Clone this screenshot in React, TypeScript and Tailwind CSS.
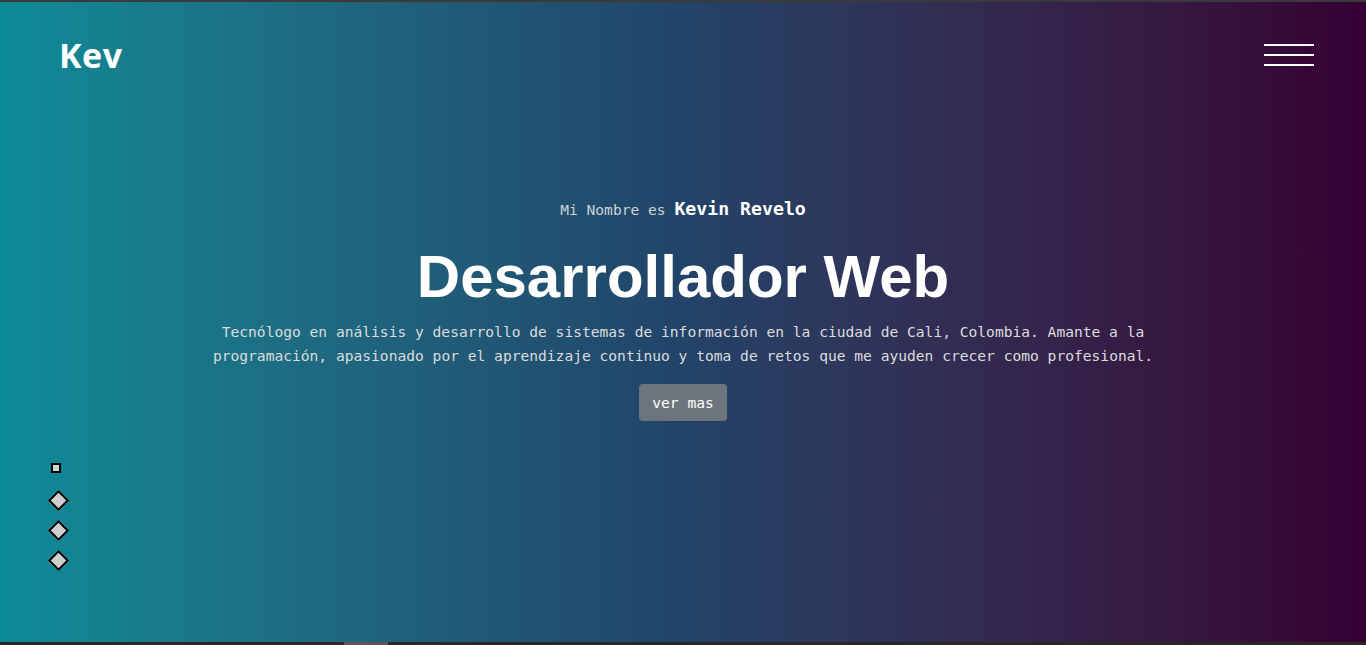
import React from 'react';

const mono = { fontFamily: '"DejaVu Sans Mono", "Liberation Mono", monospace' };

const Hamburger: React.FC = () => (
  <button className="flex flex-col gap-[8px] w-[50px] py-[1px]" aria-label="menu">
    <span className="block h-[2px] w-full bg-white"></span>
    <span className="block h-[2px] w-full bg-white"></span>
    <span className="block h-[2px] w-full bg-white"></span>
  </button>
);

const SideDots: React.FC = () => (
  <div className="absolute left-[49px] top-[461px] flex flex-col w-[20px]">
    <span className="block ml-[2px] w-[10px] h-[10px] border-2 border-black bg-[#d4d4d4]"></span>
    <ul className="mt-[20px] ml-[2px] flex flex-col gap-[15px]">
      {[0, 1, 2].map(i => (
        <li key={i} className="block w-[15px] h-[15px] rotate-45 border-2 border-black bg-[#cfcfcf]"></li>
      ))}
    </ul>
  </div>
);

const App: React.FC = () => {
  return (
    <div className="w-full h-[645px] flex flex-col bg-[#2b2b2b] overflow-hidden">
      <div className="h-[2px] bg-[#3a3a3a] shrink-0"></div>
      <section className="relative flex-1 bg-gradient-to-r from-[#0c8b97] via-[#214468] to-[#350033]">
        <header className="flex items-center justify-between pl-[59px] pr-[52px] pt-[30px]">
          <h1 className="text-[34px] leading-[46px] font-bold text-white tracking-[0.5px]" style={{ fontFamily: '"Open Sans", sans-serif' }}>Kev</h1>
          <Hamburger />
        </header>

        <div className="flex flex-col items-center text-center mt-[119px]">
          <p className="text-[14.6px] leading-[24px] text-[#cdd2d6]" style={mono}>
            Mi Nombre es <span className="text-[18.2px] font-bold text-white" style={{ fontFamily: '"DejaVu Sans Mono", monospace' }}>Kevin Revelo</span>
          </p>
          <h2 className="mt-[19px] text-[60px] leading-[72px] font-bold text-white" style={{ fontFamily: '"Liberation Sans", Arial, sans-serif' }}>
            Desarrollador Web
          </h2>
          <p className="mt-[7px] max-w-[960px] text-[14.6px] leading-[24px] text-[#dcdcdc]" style={mono}>
            Tecnólogo en análisis y desarrollo de sistemas de información en la ciudad de Cali, Colombia. Amante a la programación, apasionado por el aprendizaje continuo y toma de retos que me ayuden crecer como profesional.
          </p>
          <button className="mt-[16px] h-[37px] w-[88px] rounded-[4px] bg-[#6c757d] text-[14.6px] text-white" style={mono}>
            ver mas
          </button>
        </div>

        <SideDots />
      </section>
      <div className="h-[3px] shrink-0 bg-[#2a2724] relative">
        <div className="absolute left-[344px] top-0 h-[3px] w-[44px] bg-[#5a5754]"></div>
      </div>
    </div>
  );
};

export default App;
